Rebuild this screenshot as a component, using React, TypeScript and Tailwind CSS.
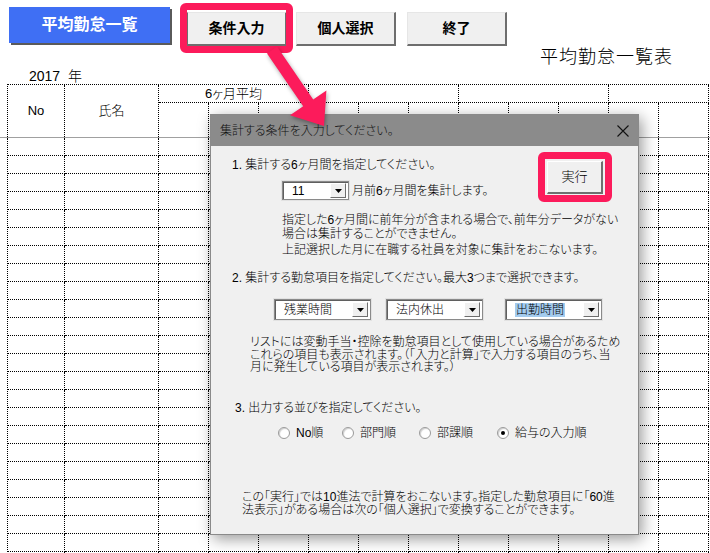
import React from 'react';

// Excel-style sheet with a VBA user form opened over it

const groups = ['6ヶ月平均', '', '', ''];
const groupSpan = ['col-span-3', 'col-span-3', 'col-span-3', 'col-span-2'];

const SheetButton = ({ label, pressed }: { label: string; pressed?: boolean }) => (
  <div
    className={`flex h-[34px] w-[100px] items-center justify-center bg-[#f0f0f0] text-[14px] font-bold text-black border-t border-r-2 border-b-2 border-t-[#e6e6e6] border-r-[#6e6e6e] border-b-[#6e6e6e] ${
      pressed ? 'border-l border-l-[#6e6e6e]' : 'border-l border-l-[#e6e6e6]'
    }`}
  >
    {label}
  </div>
);

const DropArrow = () => (
  <div className="flex h-[15px] w-[16px] items-center justify-center bg-[#f0f0f0] border border-t-white border-l-white border-r-[#6e6e6e] border-b-[#6e6e6e]">
    <svg width="7" height="4" viewBox="0 0 7 4">
      <path d="M0 0h7L3.5 4z" fill="#000" />
    </svg>
  </div>
);

const Combo = ({ value, className, selected }: { value: string; className: string; selected?: boolean }) => (
  <div className={`flex items-center bg-white border border-[#8a8a8a] shadow-[inset_1px_1px_0_#5f5f5f,0_0_0_1px_#e2e2e2] pr-[2px] ${className}`}>
    <div className="flex-1 pl-[9px]">
      <span className={selected ? 'bg-[#a3cbee] px-[1px]' : ''}>{value}</span>
    </div>
    <DropArrow />
  </div>
);

const Radio = ({ label, checked, className }: { label: string; checked?: boolean; className?: string }) => (
  <div className={`flex items-center ${className ?? ''}`}>
    <span className="flex h-[12px] w-[12px] items-center justify-center rounded-full border border-[#9a9a9a] bg-white shadow-[inset_1px_1px_1px_#cfcfcf]">
      {checked && <span className="h-[4px] w-[4px] rounded-full bg-black" />}
    </span>
    <span className="ml-[6px]">{label}</span>
  </div>
);

export default function App() {
  const rows = Array.from({ length: 24 });
  const cols = Array.from({ length: 13 });

  return (
    <div className="relative h-[553px] w-[710px] overflow-hidden bg-white text-black font-light font-['Liberation_Sans','Noto_Sans_CJK_JP',sans-serif] [font-feature-settings:'palt']">
      {/* top buttons */}
      <div className="flex h-[47px] items-start pl-[9px] pt-[7px]">
        <div className="flex h-[36px] w-[161px] items-center justify-center bg-[#3f6ff4] text-[16px] font-bold text-white shadow-[2px_2px_0_#5a5a5a]">
          平均勤怠一覧
        </div>
        <div className="ml-[17px] mt-[5px] flex gap-[11px]">
          <div className="w-[98px]">
            <SheetButton label="条件入力" pressed />
          </div>
          <SheetButton label="個人選択" />
          <SheetButton label="終了" />
        </div>
      </div>

      <div className="flex h-[20px] items-center justify-end pr-[37px] text-[18px] leading-[20px] tracking-[1px]">
        平均勤怠一覧表
      </div>
      <div className="flex h-[17px] items-center pl-[29px] text-[14px] leading-[16px]">2017&nbsp; 年</div>

      {/* sheet header */}
      <div className="ml-[7px] grid w-[702px] grid-cols-[57px_94px_repeat(11,50px)] grid-rows-[18px_34px] border-l border-t border-dotted border-black text-[13px]">
        <div className="row-span-2 flex items-center justify-center border-r border-dotted border-black">No</div>
        <div className="row-span-2 flex items-center justify-center border-r border-dotted border-black">氏名</div>
        {groups.map((g, i) => (
          <div key={i} className={`${groupSpan[i]} flex items-center justify-center border-b border-r border-dotted border-black leading-[16px]`}>
            {g}
          </div>
        ))}
        {Array.from({ length: 11 }).map((_, i) => (
          <div key={i} className="border-r border-dotted border-black" />
        ))}
      </div>
      <div className="h-px w-full bg-[#a0a0a0]" />

      {/* sheet rows */}
      <div className="ml-[7px] grid w-[702px] grid-cols-[57px_94px_repeat(11,50px)] border-l border-dotted border-black">
        {rows.map((_, r) =>
          cols.map((_, c) => <div key={`${r}-${c}`} className="h-[18px] border-b border-r border-dotted border-black" />)
        )}
      </div>

      {/* user form */}
      <div className="absolute left-[210px] top-[114px] flex h-[421px] w-[429px] flex-col border border-[#8a8a8a] bg-[#f0f0f0] text-[12px] leading-[16px] shadow-[3px_4px_14px_rgba(0,0,0,0.4)]">
        <div className="flex h-[31px] items-center justify-between bg-[#8b8b8b] pl-[9px] pr-[9px] text-[#111]">
          <span>集計する条件を入力してください。</span>
          <svg width="12" height="12" viewBox="0 0 12 12">
            <path d="M0.5 0.5l11 11M11.5 0.5l-11 11" stroke="#111" strokeWidth="1.1" />
          </svg>
        </div>

        <div className="flex">
          <div className="pl-[21px] pt-[11px]">
            <p>1. 集計する6ヶ月間を指定してください。</p>
            <div className="ml-[50px] mt-[8px] flex items-center">
              <Combo value="11" className="h-[19px] w-[67px]" />
              <span className="ml-[3px]">月前6ヶ月間を集計します。</span>
            </div>
          </div>
          <div className="ml-auto mr-[35px] mt-[15px] flex h-[33px] w-[56px] items-center justify-center border-t border-l border-r-2 border-b-2 border-t-white border-l-white border-r-[#6e6e6e] border-b-[#6e6e6e] bg-[#f0f0f0] text-[13px]">
            実行
          </div>
        </div>

        <div className="ml-[71px] mt-[13px] leading-[14px]">
          <p>指定した6ヶ月間に前年分が含まれる場合で、前年分データがない</p>
          <p>場合は集計することができません。</p>
          <p className="mt-[2px]">上記選択した月に在職する社員を対象に集計をおこないます。</p>
        </div>

        <p className="ml-[21px] mt-[13px]">2. 集計する勤怠項目を指定してください。最大3つまで選択できます。</p>
        <div className="ml-[63px] mt-[13px] flex">
          <Combo value="残業時間" className="h-[21px] w-[97px]" />
          <Combo value="法内休出" className="ml-[15px] h-[21px] w-[97px]" />
          <Combo value="出勤時間" className="ml-[22px] h-[21px] w-[97px]" selected />
        </div>

        <div className="ml-[39px] mt-[16px] leading-[12.5px]">
          <p>リストには変動手当・控除を勤怠項目として使用している場合があるため</p>
          <p>これらの項目も表示されます。（「入力と計算」で入力する項目のうち、当</p>
          <p>月に発生している項目が表示されます。）</p>
        </div>

        <p className="ml-[24px] mt-[26px]">3. 出力する並びを指定してください。</p>
        <div className="ml-[67px] mt-[9px] flex">
          <Radio label="No順" className="w-[64px]" />
          <Radio label="部門順" className="w-[77px]" />
          <Radio label="部課順" className="w-[78px]" />
          <Radio label="給与の入力順" checked />
        </div>

        <div className="ml-[31px] mt-[50px] leading-[13px]">
          <p>この「実行」では10進法で計算をおこないます。指定した勤怠項目に「60進</p>
          <p>法表示」がある場合は次の「個人選択」で変換することができます。</p>
        </div>
      </div>

      {/* callout highlights */}
      <div className="absolute left-[180px] top-[3px] h-[50px] w-[113px] rounded-[6px] border-[7px] border-[#fc1b5b]" />
      <div className="absolute left-[538px] top-[152px] h-[50px] w-[74px] rounded-[6px] border-[7px] border-[#fc1b5b]" />

      <svg className="absolute left-0 top-0 drop-shadow-[1px_2px_2px_rgba(0,0,0,0.35)]" width="710" height="553" viewBox="0 0 710 553">
        <polygon
          points="277,46.6 267,53.4 303.2,106.3 290,115.3 324,126 326.4,90.5 313.2,99.5"
          fill="#fc1b5b"
        />
      </svg>
    </div>
  );
}
